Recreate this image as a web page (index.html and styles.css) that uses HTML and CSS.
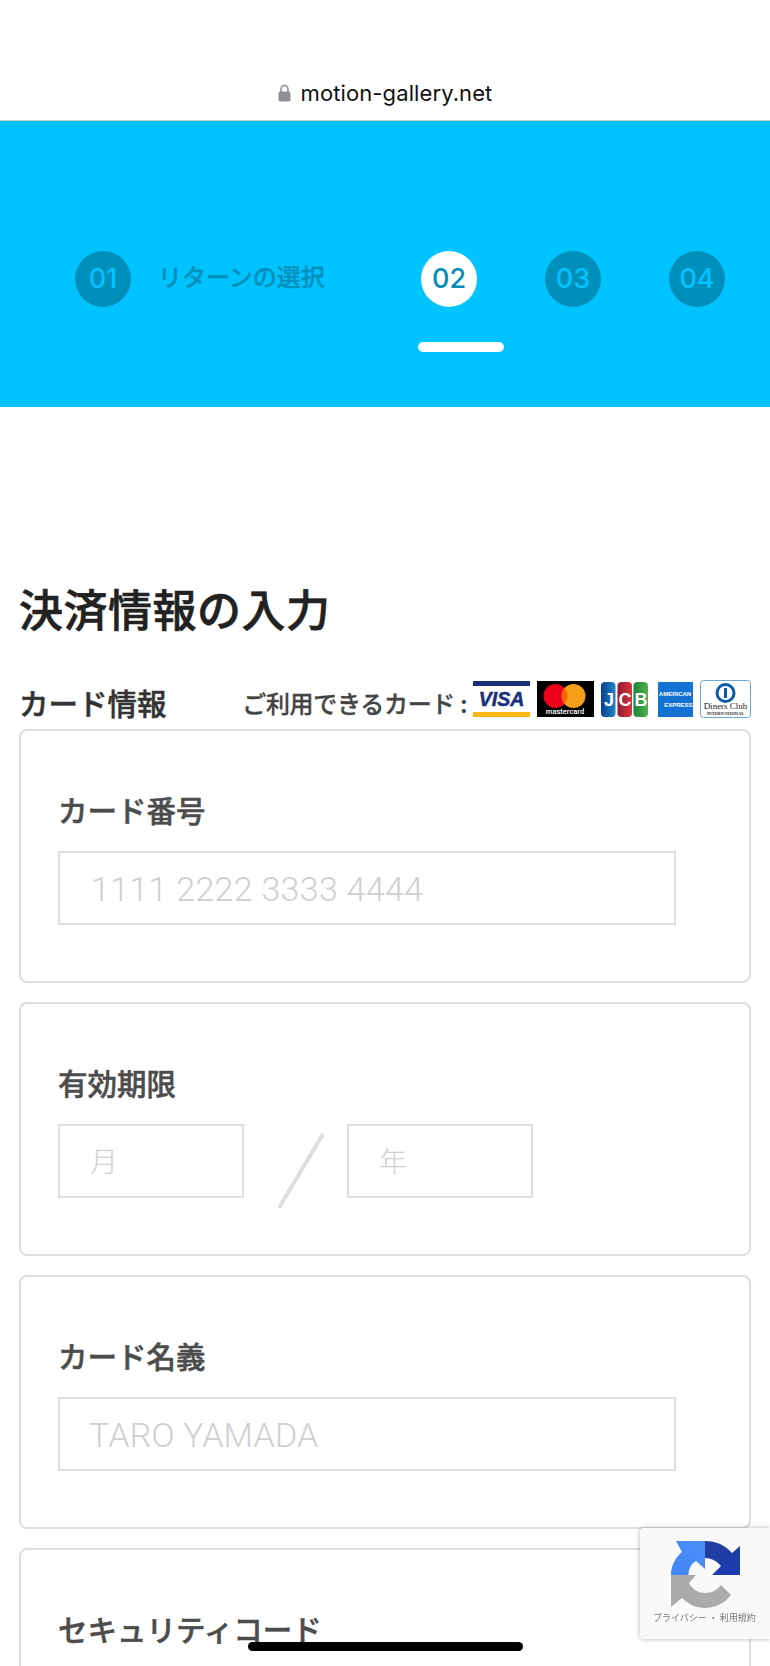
FILE: index.html
```html
<!DOCTYPE html>
<html lang="ja">
<head>
    <title>決済情報の入力 - motion-gallery.net</title>
    <meta charset="utf-8">
    <link rel="stylesheet" href="styles.css">
</head>
<body>
    <!-- アドレスバー -->
    <header class="addressbar">
        <svg class="lock" width="13" height="18" viewBox="0 0 13 18">
            <path d="M3 8V5a3.500 3.500 0 0 1 7 0v3" fill="none" stroke="#8e8e93" stroke-width="1.6"/>
            <rect x="0.5" y="7.5" width="12" height="10" rx="1.8" fill="#8e8e93"/>
        </svg>
        <span class="domain">motion-gallery.net</span>
    </header>

    <!-- ステップ -->
    <section class="stepper">
        <div class="steps">
            <div class="step">01</div>
            <div class="step-label">リターンの選択</div>
            <div class="step active">02</div>
            <div class="step">03</div>
            <div class="step">04</div>
        </div>
        <div class="step-bar"></div>
    </section>

    <main class="content">
        <h1 class="page-title">決済情報の入力</h1>

        <div class="card-head">
            <h2 class="card-title">カード情報</h2>
            <div class="brands">
                <span class="brands-text">ご利用できるカード :</span>

                <svg class="brand-visa" width="57" height="36" viewBox="0 0 57 36">
                    <rect width="57" height="36" fill="#fff"/>
                    <rect width="57" height="5" fill="#1a2f7c"/>
                    <rect y="31" width="57" height="5" fill="#fcb711"/>
                    <text x="28.5" y="25" text-anchor="middle" class="visa-text">VISA</text>
                </svg>

                <svg class="brand-mc" width="57" height="36" viewBox="0 0 57 36">
                    <rect width="57" height="36" fill="#000"/>
                    <circle cx="18.5" cy="15" r="12" fill="#eb001b"/>
                    <circle cx="36.500" cy="15" r="12" fill="#f79e1b"/>
                    <path d="M27.500 7a12 12 0 0 1 0 16a12 12 0 0 1 0-16z" fill="#ff5f00"/>
                    <text x="28" y="33" text-anchor="middle" class="mc-text">mastercard</text>
                </svg>

                <svg class="brand-jcb" width="47" height="35" viewBox="0 0 47 35">
                    <defs>
                        <linearGradient id="jcbBlue" x1="0" x2="1" y1="0" y2="0">
                            <stop offset="0" stop-color="#0a3f8f"/>
                            <stop offset="1" stop-color="#1f86c9"/>
                        </linearGradient>
                        <linearGradient id="jcbRed" x1="0" x2="1" y1="0" y2="0">
                            <stop offset="0" stop-color="#8d1c3a"/>
                            <stop offset="1" stop-color="#e0323c"/>
                        </linearGradient>
                        <linearGradient id="jcbGreen" x1="0" x2="1" y1="0" y2="0">
                            <stop offset="0" stop-color="#1c7f3a"/>
                            <stop offset="1" stop-color="#4cb648"/>
                        </linearGradient>
                    </defs>
                    <rect width="14.500" height="35" rx="4" fill="url(#jcbBlue)"/>
                    <rect x="16.500" width="14.500" height="35" rx="4" fill="url(#jcbRed)"/>
                    <rect x="32.500" width="14.500" height="35" rx="4" fill="url(#jcbGreen)"/>
                    <text x="8" y="24" text-anchor="middle" class="jcb-text">J</text>
                    <text x="24" y="24" text-anchor="middle" class="jcb-text">C</text>
                    <text x="40" y="24" text-anchor="middle" class="jcb-text">B</text>
                </svg>

                <svg class="brand-amex" width="35" height="35" viewBox="0 0 35 35">
                    <rect width="35" height="35" fill="#1272d3"/>
                    <text x="17" y="13.500" text-anchor="middle" class="amex-text">AMERICAN</text>
                    <text x="34.500" y="24.500" text-anchor="end" class="amex-text">EXPRESS</text>
                </svg>

                <svg class="brand-diners" width="51" height="38" viewBox="0 0 51 38">
                    <rect x="0.5" y="0.5" width="50" height="37" rx="3" fill="#fff" stroke="#6ea6d8"/>
                    <circle cx="25.500" cy="13" r="10" fill="#0b5aa8"/>
                    <circle cx="25.500" cy="13" r="7" fill="#fff"/>
                    <rect x="24" y="8" width="3" height="10" fill="#0b5aa8"/>
                    <text x="25.500" y="29" text-anchor="middle" class="diners-text">Diners Club</text>
                    <text x="25.500" y="34.500" text-anchor="middle" class="diners-small">INTERNATIONAL</text>
                </svg>
            </div>
        </div>

        <div class="panel">
            <div class="field-label">カード番号</div>
            <input class="input input-wide input-number" placeholder="1111 2222 3333 4444">
        </div>

        <div class="panel">
            <div class="field-label">有効期限</div>
            <div class="expiry">
                <input class="input input-short" placeholder="月">
                <svg class="slash" width="46" height="76" viewBox="0 0 46 76">
                    <line x1="1" y1="75" x2="45" y2="1" stroke="#dedede" stroke-width="4"/>
                </svg>
                <input class="input input-short" placeholder="年">
            </div>
        </div>

        <div class="panel">
            <div class="field-label">カード名義</div>
            <input class="input input-wide input-name" placeholder="TARO YAMADA">
        </div>

        <div class="panel">
            <div class="field-label">セキュリティコード</div>
        </div>
    </main>

    <!-- reCAPTCHA -->
    <aside class="recaptcha">
        <svg class="recaptcha-logo" width="69" height="68" viewBox="0 0 69 68">
            <defs>
                <linearGradient id="rcBlue" x1="0" x2="1" y1="1" y2="0">
                    <stop offset="0" stop-color="#4285f4"/>
                    <stop offset="1" stop-color="#4a90f8"/>
                </linearGradient>
                <linearGradient id="rcDark" x1="0" x2="1" y1="0" y2="1">
                    <stop offset="0" stop-color="#25409c"/>
                    <stop offset="1" stop-color="#1a3ab0"/>
                </linearGradient>
            </defs>
            <path d="M0 34C0 25 4 17 11 11L5 0H34V28L25 20C20 23 17.500 28 17.500 34Z" fill="url(#rcBlue)"/>
            <path d="M34 0C45 0 54 4 61 12L69 5V34H41L50 25C46 20 40 17 34 17Z" fill="url(#rcDark)"/>
            <path d="M0 34H25L18 42C21 48 27 52 34 52C41 52 46 49 50 44L60 54C54 62 44 67 34 67C25 67 17 63 11 57L0 66Z" fill="#ababab"/>
        </svg>
        <div class="recaptcha-links">プライバシー ・ 利用規約</div>
    </aside>

    <div class="homebar"></div>
</body>
</html>
```

FILE: styles.css
```css
html, body {
    margin: 0;
    padding: 0;
    width: 770px;
    height: 1666px;
    overflow: hidden;
    background: #fff;
    font-family: "Noto Sans CJK JP", sans-serif;
    color: #333;
}

.addressbar {
    height: 121px;
    box-sizing: border-box;
    border-bottom: 1px solid #ccc;
    display: flex;
    align-items: flex-end;
    justify-content: center;
    gap: 10px;
    padding-bottom: 10px;
}

.lock {
    margin-bottom: 8px;
}

.domain {
    font-family: Inter, sans-serif;
    font-size: 22px;
    letter-spacing: 0.1px;
    line-height: 34px;
    color: #111;
}

.stepper {
    background: #00c3ff;
    height: 286px;
    padding: 130px 0 0 75px;
    box-sizing: border-box;
}

.steps {
    display: flex;
    gap: 68px;
}

.step {
    width: 56px;
    height: 56px;
    border-radius: 50%;
    background: #008fbb;
    color: #00c3ff;
    font-family: Inter, sans-serif;
    font-weight: 500;
    font-size: 27px;
    line-height: 56px;
    text-align: center;
}

.step.active {
    background: #fff;
    color: #008fbb;
}

.step-label {
    width: 195px;
    margin-left: -41px;
    font-size: 24px;
    font-weight: 500;
    -webkit-text-stroke: 0.3px #008fbb;
    line-height: 50px;
    color: #008fbb;
}

.step-bar {
    width: 86px;
    height: 10px;
    margin: 35px 0 0 343px;
    border-radius: 5px;
    background: #fff;
}

.content {
    padding: 0 19px;
}

.page-title {
    margin: 172px 0 0;
    font-size: 44px;
    letter-spacing: 0.5px;
    font-weight: 500;
    -webkit-text-stroke: 0.6px #222;
    line-height: 58px;
    color: #222;
}

.card-head {
    display: flex;
    justify-content: space-between;
    align-items: flex-start;
    height: 49px;
    margin-top: 43px;
}

.card-title {
    margin: 0;
    font-size: 29.5px;
    font-weight: 500;
    -webkit-text-stroke: 0.5px #333;
    line-height: 44px;
    color: #333;
}

.brands {
    display: flex;
    align-items: center;
    height: 38px;
    gap: 7px;
}

.brands-text {
    font-size: 24px;
    font-weight: 500;
    -webkit-text-stroke: 0.3px #444;
    letter-spacing: -0.3px;
    line-height: 38px;
    color: #444;
    margin-top: 8px;
    margin-right: -1px;
    white-space: nowrap;
}

.visa-text {
    font: italic 700 19.5px "Liberation Sans", sans-serif;
    fill: #1a2f7c;
    stroke: #1a2f7c;
    stroke-width: 0.5px;
}

.mc-text {
    font: 500 7.5px Roboto, sans-serif;
    fill: #fff;
}

.jcb-text {
    font: 700 18px "Liberation Sans", sans-serif;
    fill: #fff;
}

.brand-amex {
    margin-left: 3px;
}

.amex-text {
    font: 700 6px "Liberation Sans", sans-serif;
    fill: #fff;
}

.diners-text {
    font: 9px "Liberation Serif", serif;
    fill: #222;
}

.diners-small {
    font: 700 4.4px "Liberation Serif", serif;
    fill: #222;
}

.panel {
    box-sizing: border-box;
    height: 254px;
    margin-bottom: 19px;
    padding: 58px 37px 0;
    border: 2px solid #dedede;
    border-radius: 8px;
}

.field-label {
    font-size: 29.5px;
    font-weight: 500;
    -webkit-text-stroke: 0.5px #4c4c4c;
    line-height: 40px;
    margin-bottom: 22px;
    color: #4c4c4c;
}

.input {
    box-sizing: border-box;
    display: block;
    height: 74px;
    padding-top: 3px;
    border: 2px solid #dedede;
    border-radius: 0;
    outline: none;
    background: #fff;
    font-family: Roboto, "Noto Sans CJK JP", sans-serif;
    font-weight: 300;
}

.input::placeholder {
    color: #cfcfcf;
    opacity: 1;
}

.input-wide {
    width: 618px;
}

.input-number {
    padding-left: 31px;
    font-size: 34px;
    letter-spacing: 0.3px;
}

.input-name {
    padding-left: 29px;
    font-size: 34px;
    letter-spacing: 0.2px;
}

.expiry {
    display: flex;
    align-items: flex-start;
}

.input-short {
    width: 186px;
    padding-left: 30px;
    font-size: 28px;
}

.slash {
    margin: 9px 23px 0 34px;
    flex: none;
}

.recaptcha {
    position: fixed;
    top: 1528px;
    right: 0;
    width: 130px;
    height: 111px;
    box-sizing: border-box;
    padding: 13px 0 0 31px;
    background: #f9f9f9;
    border-radius: 4px 0 0 4px;
    box-shadow: 0 0 5px rgba(0, 0, 0, 0.3);
}

.recaptcha-logo {
    display: block;
}

.recaptcha-links {
    margin: 2px 0 0 -18px;
    font-size: 9px;
    line-height: 14px;
    color: #777;
    white-space: nowrap;
}

.homebar {
    position: fixed;
    left: 248px;
    top: 1642px;
    width: 275px;
    height: 9px;
    border-radius: 5px;
    background: #000;
}
```
